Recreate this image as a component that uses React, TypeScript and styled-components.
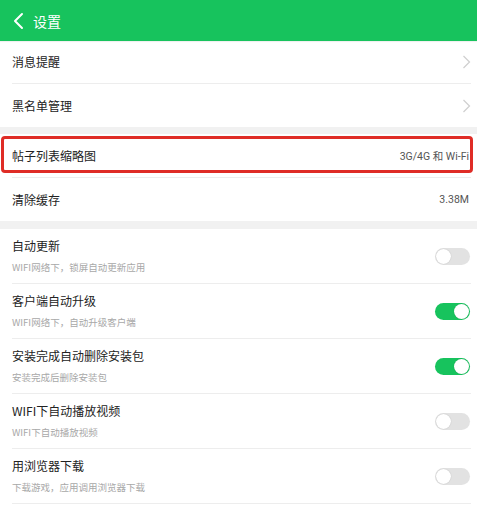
import React from 'react';
import styled, { createGlobalStyle } from 'styled-components';

const GlobalStyle = createGlobalStyle`
  html, body {
    margin: 0;
    padding: 0;
    background: #ffffff;
  }
  body {
    font-family: "Noto Sans CJK SC", Roboto, sans-serif;
    -webkit-font-smoothing: antialiased;
  }
`;

const Page = styled.div`
  width: 477px;
  height: 506px;
  overflow: hidden;
  background: #ffffff;
  display: flex;
  flex-direction: column;
`;

const Header = styled.div`
  height: 41px;
  flex-shrink: 0;
  background: #17c35d;
  display: flex;
  align-items: center;
  gap: 9px;
  padding-left: 12px;
  box-shadow: 0 1px 1px rgba(0, 0, 0, 0.06);
`;

const Title = styled.span`
  color: #ffffff;
  font-size: 14px;
  line-height: 1;
  padding-top: 1px;
`;

const Section = styled.div`
  display: flex;
  flex-direction: column;
`;

const Gap = styled.div<{ $h: number }>`
  height: ${(p) => p.$h}px;
  flex-shrink: 0;
  background: #f1f1f1;
`;

const Row = styled.div<{ $h: number; $last?: boolean }>`
  position: relative;
  height: ${(p) => p.$h}px;
  box-sizing: border-box;
  margin: 0 6px 0 12px;
  display: flex;
  align-items: center;
  justify-content: space-between;
  border-bottom: ${(p) => (p.$last ? 'none' : '1px solid #ededed')};
`;

const Texts = styled.div`
  display: flex;
  flex-direction: column;
  gap: 6px;
`;

const Label = styled.span`
  font-size: 12px;
  line-height: 16px;
  color: #222222;
`;

const Sub = styled.span`
  font-size: 9.5px;
  line-height: 14px;
  color: #a8a8a8;
`;

const Value = styled.span`
  font-family: Roboto, "Noto Sans CJK SC", sans-serif;
  font-size: 10.5px;
  color: #555555;
  margin-right: 2px;
`;

const Highlight = styled.div`
  position: absolute;
  left: -11px;
  right: -2px;
  top: 2px;
  bottom: 4px;
  border: 3px solid #df2c26;
  border-radius: 4px;
  pointer-events: none;
`;

const Track = styled.div<{ $on: boolean }>`
  width: 35px;
  height: 17px;
  border-radius: 9px;
  box-sizing: border-box;
  padding: 1px;
  display: flex;
  justify-content: ${(p) => (p.$on ? 'flex-end' : 'flex-start')};
  background: ${(p) => (p.$on ? '#17c35d' : '#e2e2e2')};
  margin-right: 1px;
`;

const Knob = styled.div`
  width: 15px;
  height: 15px;
  border-radius: 50%;
  background: #ffffff;
  box-shadow: 0 0 1px rgba(0, 0, 0, 0.25);
`;

const BackIcon = () => (
  <svg width="12" height="18" viewBox="0 0 12 18">
    <path d="M10 2 L3 9 L10 16" fill="none" stroke="#fff" strokeWidth="2" strokeLinecap="round" strokeLinejoin="round" />
  </svg>
);

const Chevron = () => (
  <svg width="9" height="14" viewBox="0 0 9 14">
    <path d="M1.5 1 L7.5 7 L1.5 13" fill="none" stroke="#cfcfcf" strokeWidth="1.2" />
  </svg>
);

const Toggle = ({ on }: { on: boolean }) => (
  <Track $on={on}>
    <Knob />
  </Track>
);

const switches = [
  { title: '自动更新', sub: 'WIFI网络下，锁屏自动更新应用', on: false },
  { title: '客户端自动升级', sub: 'WIFI网络下，自动升级客户端', on: true },
  { title: '安装完成自动删除安装包', sub: '安装完成后删除安装包', on: true },
  { title: 'WIFI下自动播放视频', sub: 'WIFI下自动播放视频', on: false },
  { title: '用浏览器下载', sub: '下载游戏，应用调用浏览器下载', on: false },
];

export default function App() {
  return (
    <Page>
      <GlobalStyle />
      <Header>
        <BackIcon />
        <Title>设置</Title>
      </Header>
      <Section>
        <Row $h={43}>
          <Label>消息提醒</Label>
          <Chevron />
        </Row>
        <Row $h={43} $last>
          <Label>黑名单管理</Label>
          <Chevron />
        </Row>
      </Section>
      <Gap $h={7} />
      <Section>
        <Row $h={44}>
          <Label>帖子列表缩略图</Label>
          <Value>3G/4G 和 Wi-Fi</Value>
          <Highlight />
        </Row>
        <Row $h={43} $last>
          <Label>清除缓存</Label>
          <Value>3.38M</Value>
        </Row>
      </Section>
      <Gap $h={8} />
      <Section>
        {switches.map((s) => (
          <Row key={s.title} $h={55}>
            <Texts>
              <Label>{s.title}</Label>
              <Sub>{s.sub}</Sub>
            </Texts>
            <Toggle on={s.on} />
          </Row>
        ))}
      </Section>
    </Page>
  );
}
